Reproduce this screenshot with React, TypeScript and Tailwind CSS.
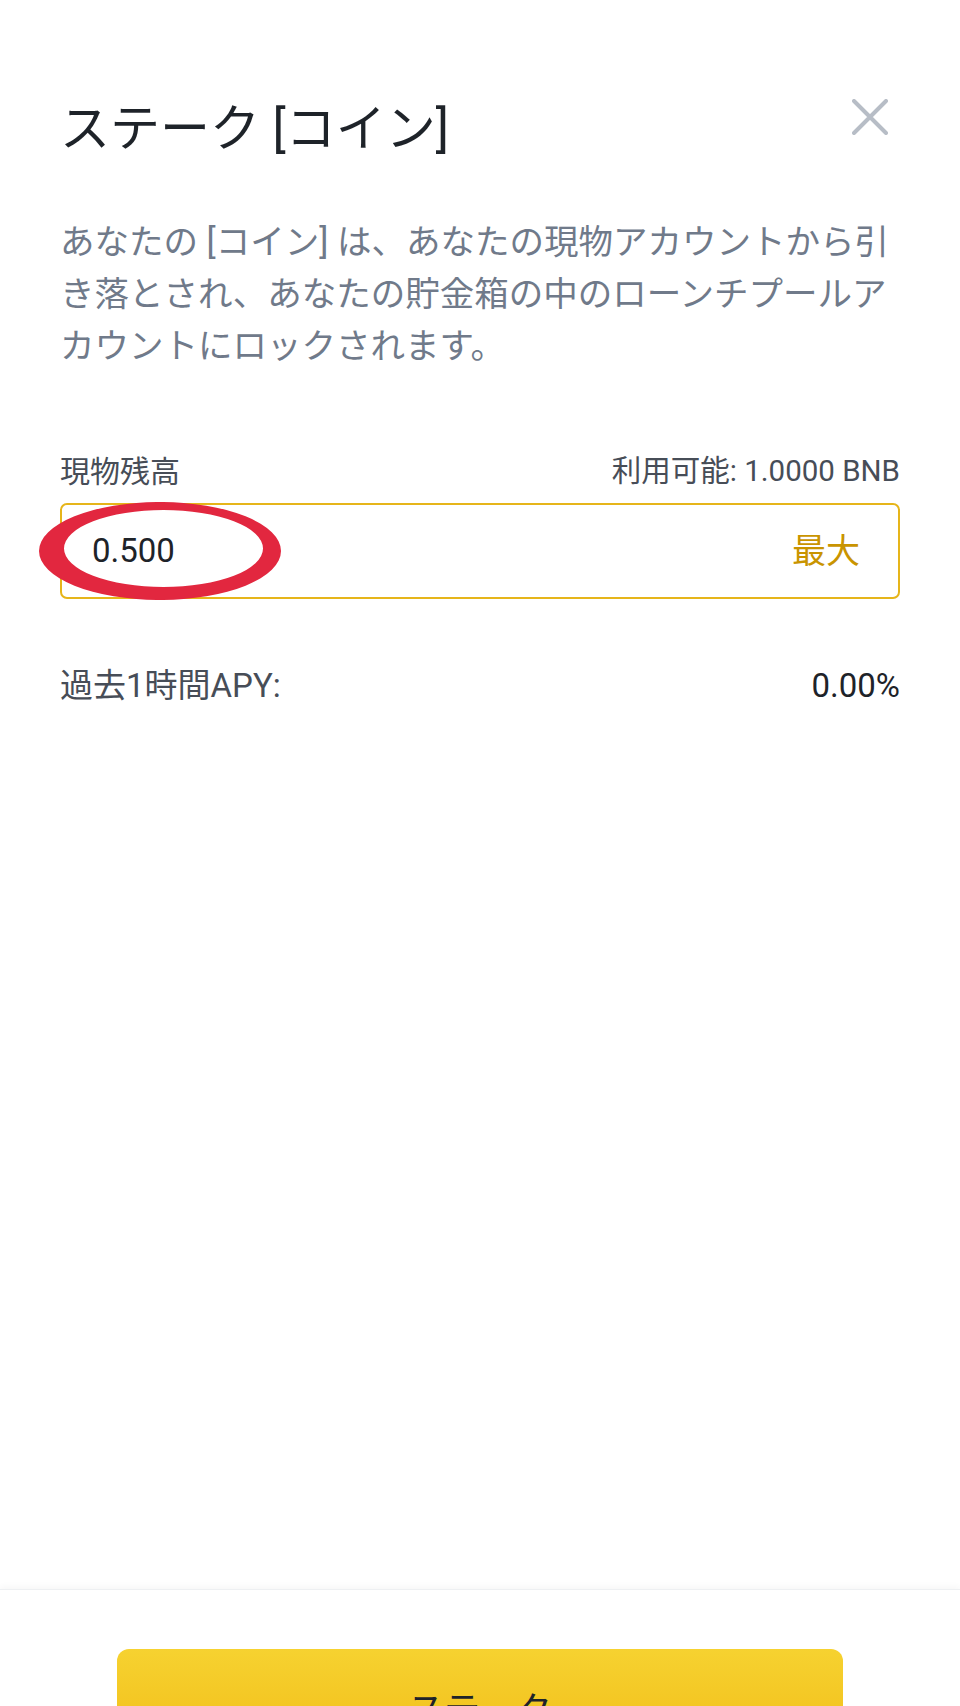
import { ChevronLeft, Share2 } from 'lucide-react';

const FONT = '"Roboto", "Noto Sans CJK JP", sans-serif';

export default function App() {
  return (
    <div
      className="w-full h-[1706px] overflow-hidden bg-white flex flex-col text-[#1E2329]"
      style={{ fontFamily: FONT }}
    >
      {/* Nav bar, scrolled almost out of view */}
      <div className="h-[8px] overflow-hidden shrink-0">
        <div className="-mt-[50px] h-[58px] flex items-center justify-between px-[36px]">
          <ChevronLeft className="h-[40px] w-[40px] text-[#707A8A]" strokeWidth={2.5} />
          <span className="text-[34px] leading-[58px] font-medium text-[#1E2329]">
            ローンチプール [コイン] ステーク
          </span>
          <Share2 className="h-[40px] w-[40px] text-[#707A8A]" strokeWidth={2.5} />
        </div>
      </div>

      {/* Main content */}
      <div className="flex-1 px-[60px]">
        {/* Title */}
        <div className="mt-[89px] h-[64px] flex items-start justify-between">
          <h1 className="text-[50px] leading-[64px] font-normal text-[#1E2329] whitespace-nowrap">
            ステーク [コイン]
          </h1>
          <button className="mt-[2px] mr-[12px] h-[36px] w-[36px] flex items-center justify-center">
            <svg viewBox="0 0 36 36" className="h-[36px] w-[36px]">
              <path d="M2 2 L34 34 M34 2 L2 34" stroke="#B7BDC6" strokeWidth="4" strokeLinecap="round" />
            </svg>
          </button>
        </div>

        {/* Description */}
        <p className="mt-[55px] text-[34.5px] leading-[52px] text-[#707A8A] whitespace-nowrap">
          あなたの [コイン] は、あなたの現物アカウントから引
          <br />
          き落とされ、あなたの貯金箱の中のローンチプールア
          <br />
          カウントにロックされます。
        </p>

        {/* Balance label row */}
        <div className="mt-[79px] h-[40px] flex items-center justify-between">
          <span className="text-[30px] text-[#474D57]">現物残高</span>
          <span className="text-[29.5px] text-[#474D57]">利用可能: 1.0000 BNB</span>
        </div>

        {/* Amount input */}
        <div className="relative mt-[12px] h-[96px] rounded-[7px] border-2 border-[#E6B51A] flex items-center justify-between pl-[30px] pr-[38px]">
          <span className="text-[33px] text-[#1E2329]">0.500</span>
          <span className="text-[34px] text-[#C99400]">最大</span>

          {/* Red hand-drawn circle annotation */}
          <svg
            viewBox="0 0 242 98"
            className="absolute left-[-23px] top-[-3px] h-[98px] w-[242px] pointer-events-none"
          >
            <path
              fillRule="evenodd"
              fill="#E2273F"
              d="M0 49 A121 49 0 1 0 242 49 A121 49 0 1 0 0 49 Z M25 46.5 A99.5 38.5 0 1 1 224 46.5 A99.5 38.5 0 1 1 25 46.5 Z"
            />
          </svg>
        </div>

        {/* APY row */}
        <div className="mt-[67px] h-[40px] flex items-center justify-between">
          <span className="text-[33px] text-[#474D57]">過去1時間APY:</span>
          <span className="text-[33px] text-[#1E2329]">0.00%</span>
        </div>
      </div>

      {/* Bottom action bar */}
      <div className="h-[117px] shrink-0 overflow-hidden border-t border-[#EEF0F2] shadow-[0_-3px_6px_rgba(0,0,0,0.03)] pt-[59px] px-[117px]">
        <button className="w-full h-[124px] rounded-[12px] bg-gradient-to-b from-[#F6D230] to-[#F0B90B] text-[36px] text-[#1E2329]">
          ステーク
        </button>
      </div>
    </div>
  );
}
